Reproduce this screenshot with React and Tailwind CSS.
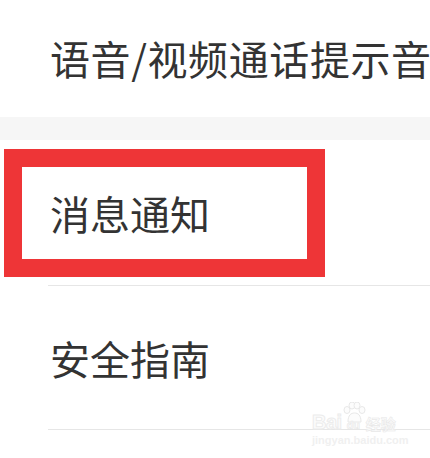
const font = { fontFamily: '"Noto Sans CJK SC", "Noto Sans", sans-serif' };

const Row = ({ label, height, divider }) => (
  <div className={`relative flex items-center bg-white ${height}`}>
    <span className="pl-[50px] text-[40px] leading-none whitespace-nowrap text-[#333333]">{label}</span>
    {divider && <div className="absolute bottom-0 left-[48px] right-0 h-px bg-[#e6e6e6]" />}
  </div>
);

const Watermark = () => (
  <div className="absolute left-[312px] top-[402px] flex flex-col items-start select-none">
    <div className="flex items-end leading-none">
      <span className="text-[20px] font-bold tracking-tight" style={{ fontFamily: '"Liberation Sans", sans-serif', WebkitTextStroke: '1px #ececec', color: '#fcfcfc' }}>Bai</span>
      <div className="relative w-[24px] h-[30px]">
        <svg width="24" height="22" viewBox="0 0 24 22" className="absolute top-0 left-0">
          <g fill="#fcfcfc" stroke="#e8e8e8" strokeWidth="1">
            <ellipse cx="5" cy="8" rx="3" ry="3.5" />
            <ellipse cx="10" cy="3.5" rx="3" ry="3.5" />
            <ellipse cx="15" cy="3.5" rx="3" ry="3.5" />
            <ellipse cx="20" cy="8" rx="3" ry="3.5" />
            <path d="M6 20 C6 13 9 11 12.5 11 C16 11 19 13 19 20 Z" />
          </g>
        </svg>
        <span className="absolute left-[5px] bottom-[1px] text-[11px] font-bold" style={{ fontFamily: '"Liberation Sans", sans-serif', WebkitTextStroke: '0.6px #e8e8e8', color: '#fcfcfc' }}>du</span>
      </div>
      <span className="text-[15px] font-bold mb-[1px]" style={{ ...font, WebkitTextStroke: '0.6px #e8e8e8', color: '#fcfcfc' }}>经验</span>
    </div>
    <span className="mt-[3px] text-[11px] leading-none font-bold" style={{ fontFamily: '"Liberation Sans", sans-serif', color: '#f0f0f0' }}>jingyan.baidu.com</span>
  </div>
);

export default function App() {
  return (
    <div className="relative w-[430px] h-[458px] overflow-hidden bg-white" style={font}>
      <div className="flex items-center h-[117px]">
        <span className="pl-[50px] pb-[2px] text-[40px] tracking-[0.6px] leading-none whitespace-nowrap text-[#333333]">语音/视频通话提示音</span>
      </div>
      <div className="h-[23px] bg-[#f6f6f6]" />
      <Row label="消息通知" height="h-[146px]" divider />
      <Row label="安全指南" height="h-[144px]" divider />

      <div className="absolute left-[4px] top-[149px] w-[321px] h-[128px] border-[18px] border-[#ee3537]" />
      <Watermark />
    </div>
  );
}
